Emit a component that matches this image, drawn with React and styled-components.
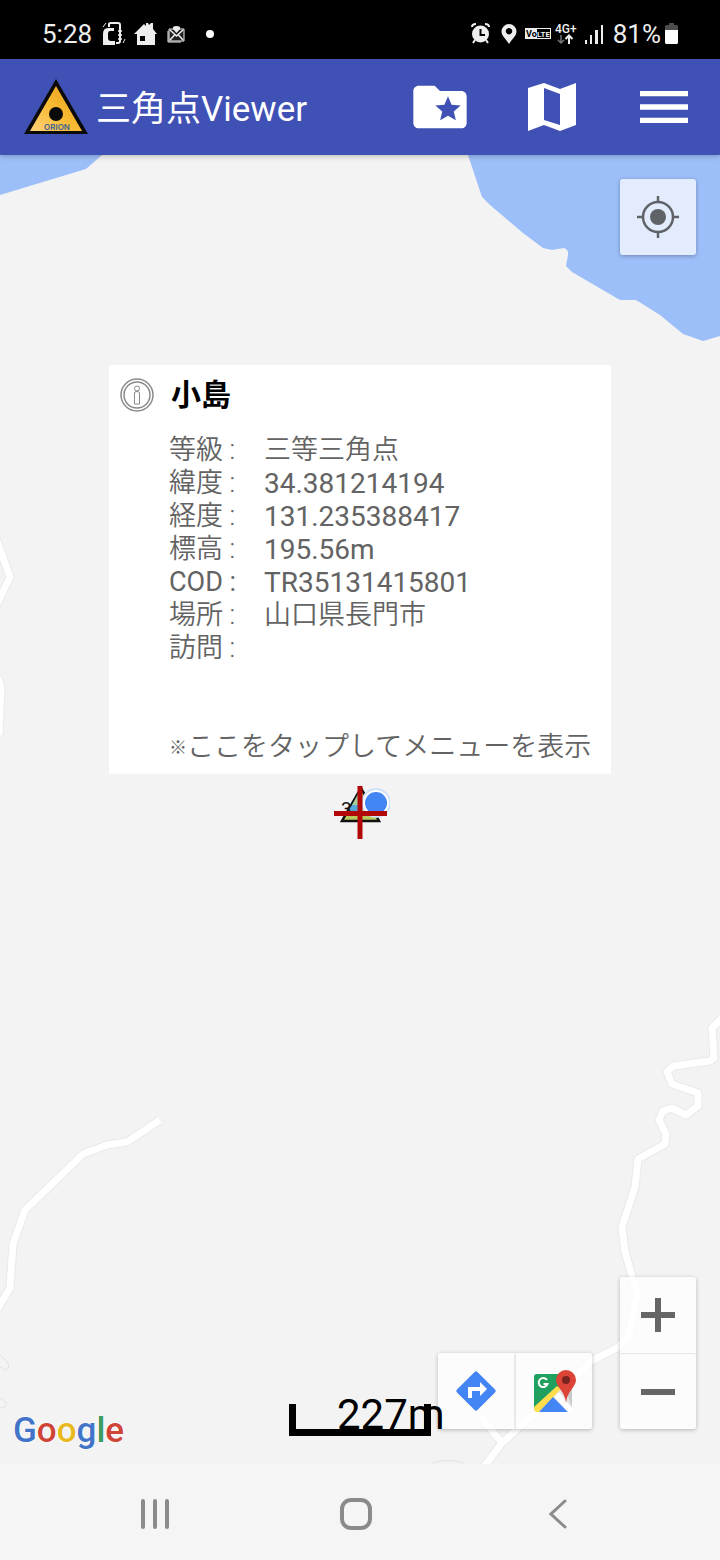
import React from 'react';
import styled, { createGlobalStyle } from 'styled-components';
import { MdFolderSpecial, MdMenu } from 'react-icons/md';

const colors = {
  primary: '#3f51b5',
  land: '#f3f3f4',
  water: '#9dbff9',
  road: '#ffffff',
  roadEdge: '#e8e9ed',
  text: '#636363',
  icon: '#5f6368',
  cross: '#b30808',
  nav: '#f5f5f5',
  navIcon: '#8b8b8b',
};

const GlobalStyle = createGlobalStyle`
  * {
    box-sizing: border-box;
  }
  body {
    margin: 0;
    font-family: Roboto, 'Noto Sans CJK JP', sans-serif;
  }
  button {
    margin: 0;
    padding: 0;
    border: 0;
    background: none;
    cursor: pointer;
  }
  svg {
    display: block;
    flex: none;
  }
`;

const Screen = styled.div`
  display: flex;
  flex-direction: column;
  min-height: 100vh;
`;

/* status bar */

const StatusBar = styled.div`
  display: flex;
  justify-content: space-between;
  height: 59px;
  padding: 8px 41px 0 42px;
  background: #000;
  color: #eee;
  font-size: 26px;
`;

const StatusGroup = styled.div`
  display: flex;
  align-items: center;
  gap: ${(props) => props.$gap}px;
`;

/* app bar */

const AppBar = styled.header`
  position: relative;
  z-index: 2;
  display: flex;
  align-items: center;
  height: 96px;
  padding-left: 24px;
  background: ${colors.primary};
  color: #fff;
  box-shadow: 0 1px 6px rgba(0, 0, 0, 0.25);
`;

const Title = styled.h1`
  flex: 1;
  margin: 0;
  padding: 6px 0 0 8px;
  font-size: 35px;
  font-weight: 400;
  line-height: 48px;
  white-space: nowrap;
`;

const BarButton = styled.button`
  display: flex;
  align-items: center;
  justify-content: center;
  width: 112px;
  height: 96px;
  color: #fff;
`;

/* map */

const MapArea = styled.main`
  position: relative;
  flex: 1;
  min-height: 800px;
  overflow: hidden;
  background: ${colors.land};
`;

const MapDrawing = styled.svg`
  position: absolute;
  inset: 0;
  width: 100%;
  height: 100%;
`;

const MapControl = styled.button`
  display: flex;
  align-items: center;
  justify-content: center;
  width: 76px;
  height: 76px;
  background: ${(props) => (props.$joined ? 'none' : 'rgba(255, 255, 255, 0.7)')};
  border-radius: 3px;
  box-shadow: ${(props) => (props.$joined ? 'none' : '0 1px 4px rgba(0, 0, 0, 0.3)')};
`;

const TopControls = styled.div`
  position: absolute;
  top: 24px;
  right: 24px;
`;

const BottomControls = styled.div`
  position: absolute;
  right: 24px;
  bottom: 35px;
  display: flex;
  align-items: flex-end;
  gap: 28px;
`;

const ControlGroup = styled.div`
  display: flex;
  flex-direction: ${(props) => (props.$vertical ? 'column' : 'row')};
  background: rgba(255, 255, 255, 0.75);
  border-radius: 3px;
  box-shadow: 0 1px 4px rgba(0, 0, 0, 0.25);

  ${MapControl} + ${MapControl} {
    ${(props) => (props.$vertical ? 'border-top: 1px solid #e6e6e6;' : 'width: 78px; border-left: 2px solid #e9e9e9;')}
  }
`;

const Attribution = styled.a`
  position: absolute;
  left: 13px;
  bottom: 11px;
  font-size: 35px;
  font-weight: 500;
  line-height: 44px;
  text-decoration: none;
  text-shadow: 0 0 2px #fff, 0 0 2px #fff;
`;

const Letter = styled.span`
  color: ${(props) => props.$color};
`;

const ScaleBar = styled.div`
  position: absolute;
  left: 50%;
  bottom: 28px;
  z-index: 1;
  width: 142px;
  height: 32px;
  border: solid #000;
  border-width: 0 7px 7px;
  transform: translateX(-50%);
`;

const ScaleText = styled.div`
  position: absolute;
  left: 41px;
  bottom: -10px;
  color: #000;
  font-size: 42px;
  line-height: 48px;
  white-space: nowrap;
`;

const Marker = styled.svg`
  position: absolute;
  left: 50%;
  top: calc(50% + 3px);
  transform: translate(-50%, -50%);
`;

/* info window */

const InfoWindow = styled.section`
  position: absolute;
  left: 50%;
  bottom: calc(50% + 36px);
  width: 502px;
  padding-bottom: 10px;
  background: #fff;
  color: ${colors.text};
  font-size: 27px;
  line-height: 33px;
  transform: translateX(-50%);
`;

const InfoHeader = styled.div`
  display: flex;
  align-items: center;
  gap: 17px;
  height: 60px;
  padding-left: 11px;
`;

const InfoTitle = styled.h2`
  margin: 0;
  color: #000;
  font-size: 30px;
  font-weight: 700;
  line-height: 36px;
`;

const InfoList = styled.dl`
  margin: 9px 0 66px;
  padding-left: 60px;
`;

const InfoRow = styled.div`
  display: grid;
  grid-template-columns: 95px 1fr;
  height: 33px;
`;

const Label = styled.dt`
  font-weight: ${(props) => (props.$latin ? 400 : 350)};
  white-space: nowrap;
`;

const Value = styled.dd`
  margin: 0;
  font-size: ${(props) => (props.$latin ? 28 : 27)}px;
  font-weight: ${(props) => (props.$latin ? 400 : 350)};
`;

const Hint = styled.p`
  margin: 0;
  padding-left: 60px;
  font-weight: 350;
  white-space: nowrap;
`;

const HintMark = styled.span`
  font-size: 18px;
  line-height: 18px;
  vertical-align: 2px;
`;

/* system navigation */

const NavBar = styled.nav`
  display: grid;
  grid-template-columns: repeat(3, 1fr);
  height: 96px;
  padding: 4px 61px 0 54px;
  background: ${colors.nav};
`;

const NavButton = styled.button`
  display: flex;
  align-items: center;
  justify-content: center;
`;

const details = [
  { label: '等級 :', value: '三等三角点' },
  { label: '緯度 :', value: '34.381214194', latin: true },
  { label: '経度 :', value: '131.235388417', latin: true },
  { label: '標高 :', value: '195.56m', latin: true },
  { label: 'COD :', value: 'TR35131415801', latin: true, latinLabel: true },
  { label: '場所 :', value: '山口県長門市' },
  { label: '訪問 :', value: '' },
];

const googleLetters = [
  ['G', '#4274c9'],
  ['o', '#cf4436'],
  ['o', '#e8b91c'],
  ['g', '#4274c9'],
  ['l', '#3d9b60'],
  ['e', '#cf4436'],
];

const roads = [
  'M160 1120 L127 1142 L107 1145 L83 1154 L25 1210 L13 1244 L10 1288 L-4 1312',
  'M-4 538 L10 577 L-4 606',
  'M-2 678 L1 688 L-1 735',
  'M724 1016 L712 1028 L714 1058 L710 1061 L673 1066 L667 1072 L672 1084 L698 1093 L698 1106 L686 1115 L672 1108 L663 1111 L659 1120 L666 1134 L665 1144 L638 1159 L635 1187 L622 1227 L625 1252 L637 1293 L629 1336 L617 1348 L593 1360 L502 1443 L483 1468',
  'M502 1443 L480 1416',
];

const GestureIcon = () => (
  <svg width="26" height="26" viewBox="0 0 26 26" fill="none" stroke="#eee" strokeWidth="2">
    <path d="M9 6 V3 Q9 2 11 2 H18 Q20 2 20 4 V20 Q20 22 18 22 H16" />
    <path d="M3 24 V13 Q3 7 8 7 H14 V10 H10 Q8 10 8 13 V17 Q8 20 11 20 H15 V24 Z" fill="#eee" stroke="none" />
    <path d="M18 10h4M18 14h4M18 18h4" strokeWidth="1.500" />
    <path d="M3 6 L6 2 M25 18 L23 22" strokeWidth="1" />
  </svg>
);

const HomeIcon = () => (
  <svg width="24" height="26" viewBox="0 0 24 26">
    <path
      d="M0 13 L10 3 L12 5 V2 H14 L15 4 L17 2 H19 V8 L23 13 H21 V24 H3 V13 Z M6 15 V20 H11 V15 Z"
      fill="#eee"
      fillRule="evenodd"
    />
  </svg>
);

const MailIcon = () => (
  <svg width="20" height="26" viewBox="0 0 20 26" fill="none" stroke="#eee" strokeWidth="1">
    <path d="M3 8 H18 V20 H3 Z" fill="#222" />
    <path d="M4 9 L10.500 15 L17 9 M4 19 L9 13.500 M17 19 L12 13.500" strokeWidth="1.500" />
    <path d="M2 10 V21 H15" />
    <path d="M10.500 12 L7 8 Q6 5 10.500 5 Q15 5 14 8 Z" fill="#eee" stroke="none" />
  </svg>
);

const AlarmIcon = () => (
  <svg width="26" height="26" viewBox="0 0 26 26">
    <circle cx="9.500" cy="13" r="8.500" fill="#eee" />
    <path d="M1 6 Q1 3 5 3 M14 3 Q18 3 18 6 M4 19 L2 22 M15 19 L17 22" fill="none" stroke="#eee" strokeWidth="2" />
    <path d="M9.500 8 V14 H14" fill="none" stroke="#000" strokeWidth="2" />
  </svg>
);

const PinIcon = () => (
  <svg width="20" height="26" viewBox="0 0 20 26">
    <path d="M8 3 a7.500 7.500 0 0 1 7.500 7.500 C15.500 15 11 18 8 23 C5 18 .5 15 .5 10.500 A7.500 7.500 0 0 1 8 3 Z M8 7 a3.200 3.200 0 1 0 .01 0 Z" fill="#eee" fillRule="evenodd" />
  </svg>
);

const VolteIcon = () => (
  <svg width="26" height="26" viewBox="0 0 26 26" fontFamily="Roboto, sans-serif" fontSize="9" fontWeight="700">
    <rect x=".5" y="7.500" width="25" height="10" fill="#000" stroke="#eee" />
    <rect x="0" y="7" width="12" height="11" fill="#eee" />
    <text x="1" y="16" fill="#000">Vo</text>
    <text x="12" y="16" fill="#eee" fontSize="8">LTE</text>
  </svg>
);

const NetworkIcon = () => (
  <svg width="26" height="26" viewBox="0 0 26 26" fontFamily="Roboto, sans-serif">
    <text x="0" y="12" fill="#eee" fontSize="12" fontWeight="500">4G+</text>
    <path d="M6 14 V22 M3 19 L6 22 L9 19" fill="none" stroke="#777" strokeWidth="1.500" />
    <path d="M14 23 V15 M10.500 18 L14 14.500 L17.500 18" fill="none" stroke="#eee" strokeWidth="2" />
  </svg>
);

const SignalIcon = () => (
  <svg width="24" height="26" viewBox="0 0 24 26" fill="#eee">
    <rect x="0" y="19" width="2" height="4" />
    <rect x="5" y="14" width="2" height="9" />
    <rect x="10" y="9" width="3" height="14" />
    <rect x="16" y="4" width="2" height="19" />
  </svg>
);

const BatteryIcon = () => (
  <svg width="14" height="26" viewBox="0 0 14 26">
    <path d="M4 2 H9 V4 H12 L13 5 V10 H0 V5 L1 4 H4 Z" fill="#4d4d4d" />
    <path d="M0 9 H13 V22 L12 23 H1 L0 22 Z" fill="#fff" />
  </svg>
);

const Logo = () => (
  <svg width="64" height="56" viewBox="0 0 64 56">
    <defs>
      <linearGradient id="logoFill" x1="0" y1="1" x2="1" y2="0">
        <stop offset="0" stopColor="#ffd27a" />
        <stop offset=".5" stopColor="#f9b930" />
        <stop offset="1" stopColor="#e09a1c" />
      </linearGradient>
    </defs>
    <path d="M32 0 L64 55 H0 Z" fill="#0a0a0a" />
    <path d="M32 7 L58 52 H6 Z" fill="url(#logoFill)" />
    <circle cx="32" cy="35" r="7" fill="#0a0a0a" />
    <text x="33" y="51" textAnchor="middle" fontFamily="Inter, sans-serif" fontSize="8" fontWeight="600" fill="#38618f">
      ORION
    </text>
  </svg>
);

const MapIcon = () => (
  <svg width="48" height="48" viewBox="0 0 48 48">
    <path d="M0 5 L16 0 L32 6 L48 0 V42 L32 48 L16 42 L0 48 Z M16 5 V37 L32 42 V11 Z" fill="#fff" fillRule="evenodd" />
  </svg>
);

const LocateIcon = () => (
  <svg width="42" height="42" viewBox="0 0 42 42" fill="none" stroke={colors.icon}>
    <circle cx="21" cy="21" r="15" strokeWidth="2.500" />
    <circle cx="21" cy="21" r="8" fill={colors.icon} stroke="none" />
    <path d="M21 0v6M21 36v6M0 21h6M36 21h6" strokeWidth="2.500" />
  </svg>
);

const InfoIcon = () => (
  <svg width="34" height="34" viewBox="0 0 34 34" fill="none" stroke="#8a8a8a">
    <circle cx="17" cy="17" r="16" strokeWidth="1.500" />
    <circle cx="17" cy="17" r="13" strokeWidth="1.500" />
    <circle cx="17" cy="10.500" r="2.500" />
    <path d="M14.500 26 V15 Q14.500 13.500 17 13.500 Q19.500 13.500 19.500 15 V26 Z" />
  </svg>
);

const DirectionsIcon = () => (
  <svg width="40" height="40" viewBox="0 0 40 40">
    <path d="M18.600 1 Q20 -.4 21.400 1 L39 18.600 Q40.400 20 39 21.400 L21.400 39 Q20 40.400 18.600 39 L1 21.400 Q-.4 20 1 18.600 Z" fill="#4385f4" />
    <path d="M12 27 V16 H24 V11 L31 18 L24 25 V20 H16 V27 Z" fill="#fff" />
  </svg>
);

const GoogleMapsIcon = () => (
  <svg width="44" height="44" viewBox="0 0 44 44">
    <path d="M5 5 H36 L40 40 L36 43 H5 L2 40 V8 Q2 5 5 5 Z" fill="#e4e4e4" />
    <path d="M5 5 H28 V17 L2 41 V8 Q2 5 5 5 Z" fill="#1fa05f" />
    <path d="M2 38 L25 17 L29 20 L7 43 H4 Q2 42 2 40 Z" fill="#ffdd4c" />
    <path d="M7 43 L21 28 L36 43 Z" fill="#4385f4" />
    <path d="M22 28 L27 23 L40 39 V42 L36 43 Z" fill="#fff" />
    <path d="M34 22 L40 17 V38 Z" fill="#c9c9c9" />
    <path d="M34 1 A10 10 0 0 1 44 11 C44 18 35 22 34 34 C33 22 24 18 24 11 A10 10 0 0 1 34 1 Z" fill="#dc4437" />
    <circle cx="34" cy="11" r="4" fill="#7b231e" />
    <path d="M15 11 A4.500 4.500 0 1 0 15.500 15 H11.500" fill="none" stroke="#fff" strokeWidth="2" />
  </svg>
);

const BaseMap = () => (
  <MapDrawing viewBox="0 155 720 1309" preserveAspectRatio="xMidYMid slice" aria-hidden="true">
    <g fill={colors.water}>
      <path d="M0 155 H102 L86 169 L0 195 Z" />
      <path d="M468 155 L482 197 L490 205 L523 233 L543 248 L552 250 L564 248 Q569 250 568 255 L566 266 L572 272 L620 300 H636 L660 315 L683 334 L703 341 L720 336 V155 Z" />
    </g>
    {[
      { stroke: colors.roadEdge, width: 9 },
      { stroke: colors.road, width: 7 },
    ].map((line) => (
      <g key={line.width} fill="none" stroke={line.stroke} strokeWidth={line.width} strokeLinejoin="round">
        {roads.map((d) => (
          <path key={d} d={d} />
        ))}
      </g>
    ))}
    <g fill="none" stroke="#e2e3e6" strokeWidth="1">
      <path d="M0 1354 L8 1363 Q10 1369 5 1370 L0 1367" />
      <path d="M0 1398 L6 1402 Q8 1408 0 1408" />
      <path d="M432 1463 Q448 1458 464 1463" />
    </g>
  </MapDrawing>
);

const PointMarker = () => (
  <Marker width="60" height="60" viewBox="330 783 60 60">
    <path d="M361 788 L379 821 H342 Z" fill="#b9c85a" stroke="#111" strokeWidth="2.500" />
    <path d="M358 796 L348 811 H358 Z" fill="#55a8d8" />
    <path d="M358 794 L352 805 H358 Z" fill="#a9d09a" />
    <text x="341" y="815" fontFamily="Roboto, sans-serif" fontSize="19" fill="#111">3</text>
    <circle cx="376" cy="803" r="15" fill="#cfe0fa" />
    <circle cx="376" cy="803" r="13" fill="#fff" />
    <circle cx="376" cy="803" r="11" fill="#4385f4" />
    <path d="M360 786 V839 M334 813.500 H387" stroke={colors.cross} strokeWidth="5" />
  </Marker>
);

const App = () => (
  <Screen lang="ja">
    <GlobalStyle />
    <StatusBar>
      <StatusGroup $gap={8}>
        <span>5:28</span>
        <GestureIcon />
        <HomeIcon />
        <MailIcon />
        <svg width="32" height="26" viewBox="0 0 32 26">
          <circle cx="16" cy="13" r="4" fill="#fff" />
        </svg>
      </StatusGroup>
      <StatusGroup $gap={4}>
        <AlarmIcon />
        <PinIcon />
        <VolteIcon />
        <NetworkIcon />
        <SignalIcon />
        <span>81%</span>
        <BatteryIcon />
      </StatusGroup>
    </StatusBar>

    <AppBar>
      <Logo />
      <Title>三角点Viewer</Title>
      <BarButton aria-label="favorites">
        <MdFolderSpecial size={64} />
      </BarButton>
      <BarButton aria-label="map type">
        <MapIcon />
      </BarButton>
      <BarButton aria-label="menu">
        <MdMenu size={64} />
      </BarButton>
    </AppBar>

    <MapArea>
      <BaseMap />
      <TopControls>
        <MapControl aria-label="my location">
          <LocateIcon />
        </MapControl>
      </TopControls>

      <PointMarker />
      <InfoWindow>
        <InfoHeader>
          <InfoIcon />
          <InfoTitle>小島</InfoTitle>
        </InfoHeader>
        <InfoList>
          {details.map((item) => (
            <InfoRow key={item.label}>
              <Label $latin={item.latinLabel}>{item.label}</Label>
              <Value $latin={item.latin}>{item.value}</Value>
            </InfoRow>
          ))}
        </InfoList>
        <Hint>
          <HintMark>※</HintMark>ここをタップしてメニューを表示
        </Hint>
      </InfoWindow>

      <Attribution href="#google" aria-label="Google">
        {googleLetters.map(([letter, color], i) => (
          <Letter key={i} $color={color}>{letter}</Letter>
        ))}
      </Attribution>
      <ScaleBar>
        <ScaleText>227m</ScaleText>
      </ScaleBar>
      <BottomControls>
        <ControlGroup>
          <MapControl $joined aria-label="directions">
            <DirectionsIcon />
          </MapControl>
          <MapControl $joined aria-label="open in Google Maps">
            <GoogleMapsIcon />
          </MapControl>
        </ControlGroup>
        <ControlGroup $vertical>
          <MapControl $joined aria-label="zoom in">
            <svg width="34" height="34" viewBox="0 0 34 34">
              <path d="M17 0v34M0 17h34" stroke="#666" strokeWidth="6" />
            </svg>
          </MapControl>
          <MapControl $joined aria-label="zoom out">
            <svg width="34" height="34" viewBox="0 0 34 34">
              <path d="M0 17h34" stroke="#666" strokeWidth="6" />
            </svg>
          </MapControl>
        </ControlGroup>
      </BottomControls>
    </MapArea>

    <NavBar>
      <NavButton aria-label="recent apps">
        <svg width="30" height="30" viewBox="0 0 30 30" stroke={colors.navIcon} strokeWidth="4" strokeLinecap="round">
          <path d="M3 2v26M15 2v26M27 2v26" />
        </svg>
      </NavButton>
      <NavButton aria-label="home">
        <svg width="32" height="32" viewBox="0 0 32 32">
          <rect x="2" y="2" width="28" height="28" rx="9" fill="none" stroke={colors.navIcon} strokeWidth="4" />
        </svg>
      </NavButton>
      <NavButton aria-label="back">
        <svg width="18" height="30" viewBox="0 0 18 30">
          <path d="M16 2 L2 15 L16 28" fill="none" stroke={colors.navIcon} strokeWidth="3" strokeLinecap="round" />
        </svg>
      </NavButton>
    </NavBar>
  </Screen>
);

export default App;
